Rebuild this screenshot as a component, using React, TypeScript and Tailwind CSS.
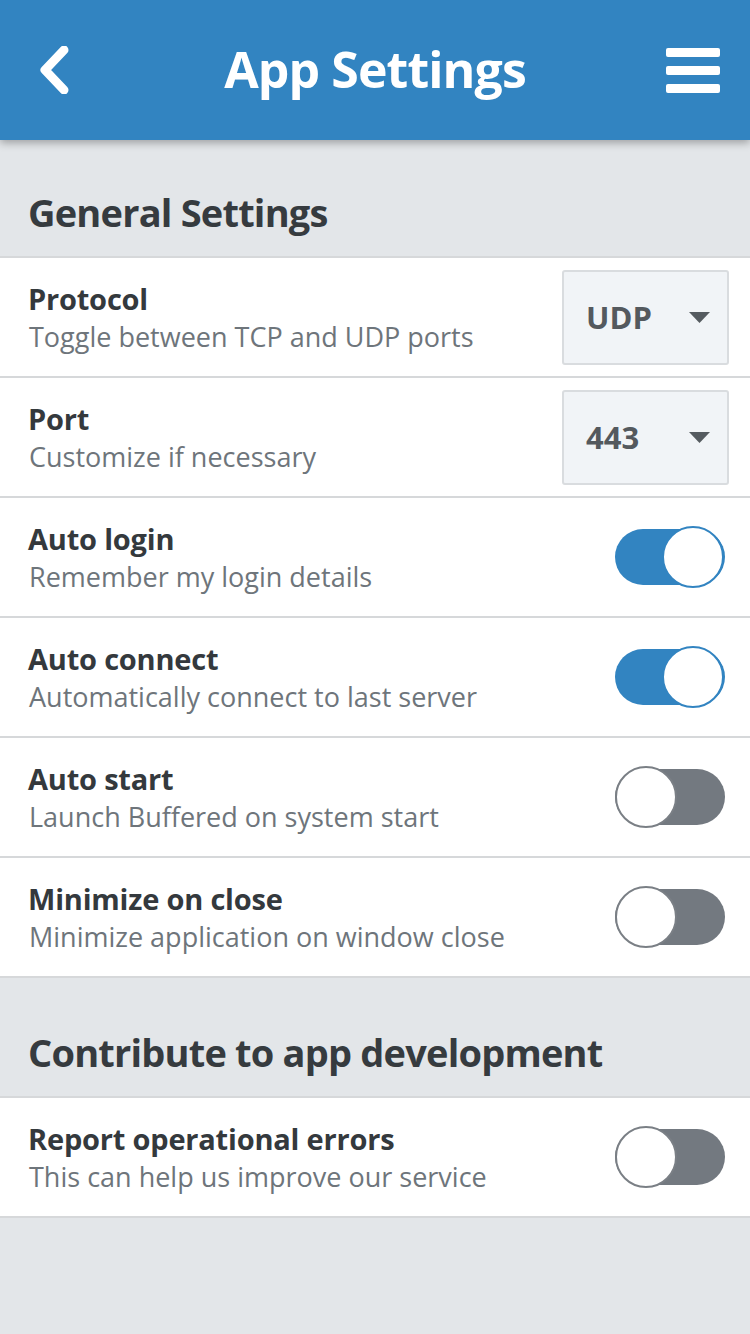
import React from "react";

const font = { fontFamily: '"Open Sans", "Noto Sans", sans-serif' };

const Caret = () => (
    <svg width="21" height="11" viewBox="0 0 21 11" className="shrink-0">
        <path d="M0 0 H21 L10.5 11 Z" fill="#555b60" />
    </svg>
);

const Select = ({ value }: { value: string }) => (
    <div className="w-[167px] h-[95px] shrink-0 flex items-center justify-between pl-[22px] pr-[17px] bg-[#f1f4f7] border-2 border-[#d9dcdf] rounded-[3px]">
        <span className="text-[31px] font-bold text-[#54595e] leading-none">{value}</span>
        <Caret />
    </div>
);

const Toggle = ({ on }: { on: boolean }) => (
    <div className={`relative w-[110px] h-[56px] mr-[4px] shrink-0 rounded-full ${on ? "bg-[#3284c1]" : "bg-[#737980]"}`}>
        <div
            className={`absolute top-[-3px] w-[62px] h-[62px] rounded-full bg-white border-2 ${
                on ? "right-[1px] border-[#3284c1]" : "left-0 border-[#7a7f85]"
            }`}
        />
    </div>
);

const Row = ({ title, subtitle, children }: { title: string; subtitle: string; children: React.ReactNode }) => (
    <div className="h-[120px] bg-white border-b-2 border-[#d6d8da] flex items-center justify-between pl-[28px] pr-[21px]">
        <div className="flex flex-col pt-[2px]">
            <span className="text-[29px] font-bold text-[#34393d] leading-[38px] tracking-[-0.2px]">{title}</span>
            <span className="text-[27px] text-[#6e757b] leading-[38px] ml-[1px]">{subtitle}</span>
        </div>
        {children}
    </div>
);

const SectionHeader = ({ label }: { label: string }) => (
    <div className="h-[120px] border-b-2 border-[#d6d8da] flex items-end pl-[28px] pb-[20px]">
        <h2 className="text-[38px] font-bold text-[#363b3f] leading-[48px] tracking-[-0.8px]">{label}</h2>
    </div>
);

export default function App() {
    return (
        <div className="min-h-[1334px] w-[750px] bg-[#e3e6e9]" style={font}>
            {/* Top bar */}
            <header className="relative z-10 h-[140px] bg-[#3284c1] grid grid-cols-[1fr_auto_1fr] items-center shadow-[0_3px_8px_rgba(0,0,0,0.3)]">
                <div className="pl-[37px]">
                    <svg width="34" height="48" viewBox="0 0 34 48">
                        <path d="M27 4 L8 24 L27 44" fill="none" stroke="#fff" strokeWidth="9" strokeLinecap="round" strokeLinejoin="round" />
                    </svg>
                </div>
                <h1 className="text-[50px] font-bold text-white leading-none tracking-[-0.9px] -mt-[3px]">App Settings</h1>
                <div className="flex justify-end pr-[30px]">
                    <div className="flex flex-col gap-[9px] w-[54px]">
                        <div className="h-[9px] bg-white rounded-[2px]" />
                        <div className="h-[9px] bg-white rounded-[2px]" />
                        <div className="h-[9px] bg-white rounded-[2px]" />
                    </div>
                </div>
            </header>

            <div className="-mt-[2px]">
                <SectionHeader label="General Settings" />
                <Row title="Protocol" subtitle="Toggle between TCP and UDP ports">
                    <Select value="UDP" />
                </Row>
                <Row title="Port" subtitle="Customize if necessary">
                    <Select value="443" />
                </Row>
                <Row title="Auto login" subtitle="Remember my login details">
                    <Toggle on />
                </Row>
                <Row title="Auto connect" subtitle="Automatically connect to last server">
                    <Toggle on />
                </Row>
                <Row title="Auto start" subtitle="Launch Buffered on system start">
                    <Toggle on={false} />
                </Row>
                <Row title="Minimize on close" subtitle="Minimize application on window close">
                    <Toggle on={false} />
                </Row>

                <SectionHeader label="Contribute to app development" />
                <Row title="Report operational errors" subtitle="This can help us improve our service">
                    <Toggle on={false} />
                </Row>
            </div>
        </div>
    );
}
